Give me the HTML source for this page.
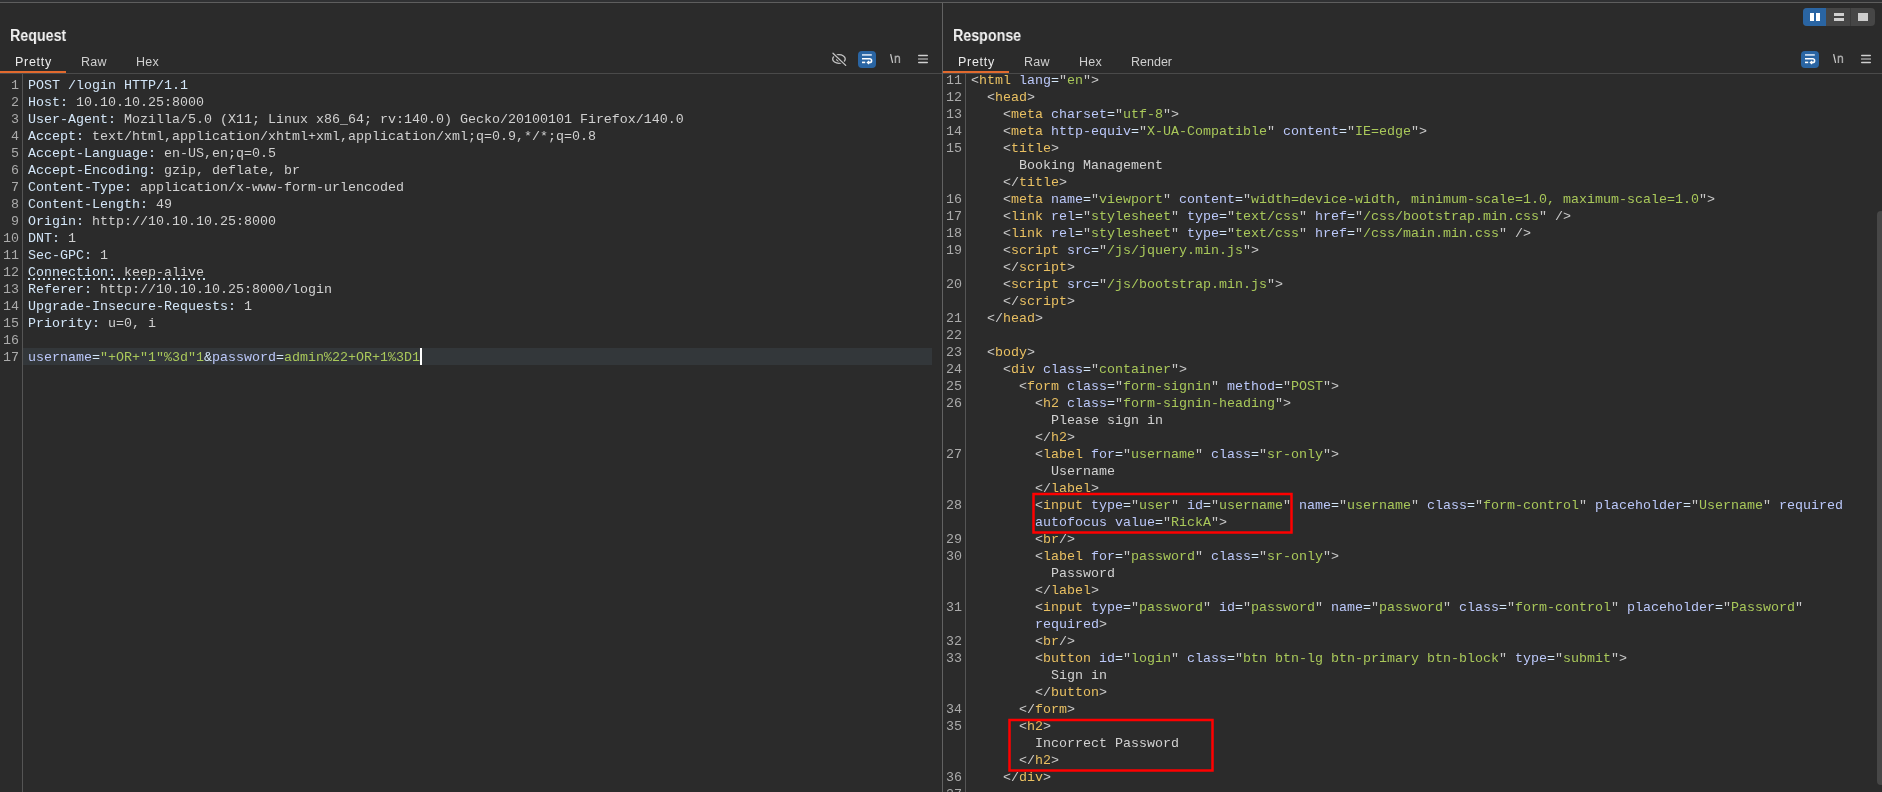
<!DOCTYPE html><html><head><meta charset="utf-8"><style>
*{margin:0;padding:0;box-sizing:border-box}
html,body{width:1882px;height:792px;overflow:hidden;background:#2b2b2b}
body{position:relative;font-family:"Liberation Sans",sans-serif}
.gs{will-change:transform}
.abs{position:absolute}
i{font-style:normal}
.code{position:absolute;font-family:"Liberation Mono",monospace;font-size:13.333px;line-height:17px;white-space:pre;}
.nums{position:absolute;font-family:"Liberation Mono",monospace;font-size:13.333px;line-height:17px;white-space:pre;text-align:right;color:#ababab;width:40px}
.p{color:#c9c9c9} .tg{color:#e9c062} .at{color:#bbc8fa} .av{color:#a9c85a} .tx{color:#d2d2d2}
.hn{color:#d3e6f8} .hv{color:#d0d0d0} .an{color:#bbc8fa}
.h{position:absolute;font-weight:bold;font-size:16px;color:#f2f2f2;transform-origin:0 0;transform:scaleX(0.89);white-space:nowrap;line-height:20px;will-change:transform}
.tab{position:absolute;font-size:12.5px;letter-spacing:0.5px;color:#cfcfcf;white-space:nowrap;line-height:16px;will-change:transform}
.tab.sel{color:#ececec}
.line{position:absolute;background:#4a4a4a}
.orange{position:absolute;background:#e26a2e;height:2px}
</style></head><body><div class="abs" style="left:0;top:0;width:1882px;height:2px;background:#303133"></div><div class="abs" style="left:0;top:2px;width:1882px;height:1px;background:#5e5e5e"></div><div class="abs" style="left:942px;top:3px;width:1px;height:789px;background:#626262"></div><div class="h" style="left:10px;top:26px">Request</div><div class="tab sel" style="left:15px;top:54px;letter-spacing:0.7px">Pretty</div><div class="tab" style="left:81px;top:54px;letter-spacing:0.2px">Raw</div><div class="tab" style="left:136px;top:54px;letter-spacing:0.2px">Hex</div><div class="line" style="left:0;top:73px;width:942px;height:1px"></div><div class="orange" style="left:0;top:71px;width:66px"></div><div class="h" style="left:953px;top:26px">Response</div><div class="tab sel" style="left:958px;top:54px;letter-spacing:0.7px">Pretty</div><div class="tab" style="left:1024px;top:54px;letter-spacing:0.2px">Raw</div><div class="tab" style="left:1079px;top:54px;letter-spacing:0.2px">Hex</div><div class="tab" style="left:1131px;top:54px;letter-spacing:0.0px">Render</div><div class="line" style="left:943px;top:73px;width:939px;height:1px"></div><div class="orange" style="left:943px;top:71px;width:66px"></div><div class="abs" style="left:22px;top:74px;width:1px;height:718px;background:#555"></div><div class="abs" style="left:23px;top:348px;width:909px;height:17px;background:#33373a"></div><div class="abs" style="left:28px;top:278px;width:178px;height:2px;background:repeating-linear-gradient(90deg,#c9dbe8 0 2px,transparent 2px 5px)"></div><div class="nums gs" style="left:-21px;top:77px">1
2
3
4
5
6
7
8
9
10
11
12
13
14
15
16
17</div><div class="code gs" style="left:28px;top:77px"><i class="hn">POST /login HTTP/1.1</i>
<i class="hn">Host:</i><i class="hv"> 10.10.10.25:8000</i>
<i class="hn">User-Agent:</i><i class="hv"> Mozilla/5.0 (X11; Linux x86_64; rv:140.0) Gecko/20100101 Firefox/140.0</i>
<i class="hn">Accept:</i><i class="hv"> text/html,application/xhtml+xml,application/xml;q=0.9,*/*;q=0.8</i>
<i class="hn">Accept-Language:</i><i class="hv"> en-US,en;q=0.5</i>
<i class="hn">Accept-Encoding:</i><i class="hv"> gzip, deflate, br</i>
<i class="hn">Content-Type:</i><i class="hv"> application/x-www-form-urlencoded</i>
<i class="hn">Content-Length:</i><i class="hv"> 49</i>
<i class="hn">Origin:</i><i class="hv"> http://10.10.10.25:8000</i>
<i class="hn">DNT:</i><i class="hv"> 1</i>
<i class="hn">Sec-GPC:</i><i class="hv"> 1</i>
<i class="hn">Connection:</i><i class="hv"> keep-alive</i>
<i class="hn">Referer:</i><i class="hv"> http://10.10.10.25:8000/login</i>
<i class="hn">Upgrade-Insecure-Requests:</i><i class="hv"> 1</i>
<i class="hn">Priority:</i><i class="hv"> u=0, i</i>

<i class="an">username</i><i class="hn">=</i><i class="av">"+OR+"1"%3d"1</i><i class="hn">&amp;</i><i class="an">password</i><i class="hn">=</i><i class="av">admin%22+OR+1%3D1</i></div><div class="abs" style="left:420px;top:348px;width:2px;height:17px;background:#fff"></div><div class="abs" style="left:965px;top:74px;width:1px;height:718px;background:#555"></div><div class="abs" style="left:943px;top:74px;width:939px;height:718px;overflow:hidden"><div class="nums gs" style="left:-21px;top:-2px">11
12
13
14
15


16
17
18
19

20

21
22
23
24
25
26


27


28

29
30


31

32
33


34
35


36
37</div><div class="code gs" style="left:28px;top:-2px"><i class="p">&lt;</i><i class="tg">html</i> <i class="at">lang</i><i class="hn">=</i><i class="p">"</i><i class="av">en</i><i class="p">"</i><i class="p">&gt;</i>
  <i class="p">&lt;</i><i class="tg">head</i><i class="p">&gt;</i>
    <i class="p">&lt;</i><i class="tg">meta</i> <i class="at">charset</i><i class="hn">=</i><i class="p">"</i><i class="av">utf-8</i><i class="p">"</i><i class="p">&gt;</i>
    <i class="p">&lt;</i><i class="tg">meta</i> <i class="at">http-equiv</i><i class="hn">=</i><i class="p">"</i><i class="av">X-UA-Compatible</i><i class="p">"</i> <i class="at">content</i><i class="hn">=</i><i class="p">"</i><i class="av">IE=edge</i><i class="p">"</i><i class="p">&gt;</i>
    <i class="p">&lt;</i><i class="tg">title</i><i class="p">&gt;</i>
      <i class="tx">Booking Management</i>
    <i class="p">&lt;/</i><i class="tg">title</i><i class="p">&gt;</i>
    <i class="p">&lt;</i><i class="tg">meta</i> <i class="at">name</i><i class="hn">=</i><i class="p">"</i><i class="av">viewport</i><i class="p">"</i> <i class="at">content</i><i class="hn">=</i><i class="p">"</i><i class="av">width=device-width, minimum-scale=1.0, maximum-scale=1.0</i><i class="p">"</i><i class="p">&gt;</i>
    <i class="p">&lt;</i><i class="tg">link</i> <i class="at">rel</i><i class="hn">=</i><i class="p">"</i><i class="av">stylesheet</i><i class="p">"</i> <i class="at">type</i><i class="hn">=</i><i class="p">"</i><i class="av">text/css</i><i class="p">"</i> <i class="at">href</i><i class="hn">=</i><i class="p">"</i><i class="av">/css/bootstrap.min.css</i><i class="p">"</i> <i class="p">/&gt;</i>
    <i class="p">&lt;</i><i class="tg">link</i> <i class="at">rel</i><i class="hn">=</i><i class="p">"</i><i class="av">stylesheet</i><i class="p">"</i> <i class="at">type</i><i class="hn">=</i><i class="p">"</i><i class="av">text/css</i><i class="p">"</i> <i class="at">href</i><i class="hn">=</i><i class="p">"</i><i class="av">/css/main.min.css</i><i class="p">"</i> <i class="p">/&gt;</i>
    <i class="p">&lt;</i><i class="tg">script</i> <i class="at">src</i><i class="hn">=</i><i class="p">"</i><i class="av">/js/jquery.min.js</i><i class="p">"</i><i class="p">&gt;</i>
    <i class="p">&lt;/</i><i class="tg">script</i><i class="p">&gt;</i>
    <i class="p">&lt;</i><i class="tg">script</i> <i class="at">src</i><i class="hn">=</i><i class="p">"</i><i class="av">/js/bootstrap.min.js</i><i class="p">"</i><i class="p">&gt;</i>
    <i class="p">&lt;/</i><i class="tg">script</i><i class="p">&gt;</i>
  <i class="p">&lt;/</i><i class="tg">head</i><i class="p">&gt;</i>

  <i class="p">&lt;</i><i class="tg">body</i><i class="p">&gt;</i>
    <i class="p">&lt;</i><i class="tg">div</i> <i class="at">class</i><i class="hn">=</i><i class="p">"</i><i class="av">container</i><i class="p">"</i><i class="p">&gt;</i>
      <i class="p">&lt;</i><i class="tg">form</i> <i class="at">class</i><i class="hn">=</i><i class="p">"</i><i class="av">form-signin</i><i class="p">"</i> <i class="at">method</i><i class="hn">=</i><i class="p">"</i><i class="av">POST</i><i class="p">"</i><i class="p">&gt;</i>
        <i class="p">&lt;</i><i class="tg">h2</i> <i class="at">class</i><i class="hn">=</i><i class="p">"</i><i class="av">form-signin-heading</i><i class="p">"</i><i class="p">&gt;</i>
          <i class="tx">Please sign in</i>
        <i class="p">&lt;/</i><i class="tg">h2</i><i class="p">&gt;</i>
        <i class="p">&lt;</i><i class="tg">label</i> <i class="at">for</i><i class="hn">=</i><i class="p">"</i><i class="av">username</i><i class="p">"</i> <i class="at">class</i><i class="hn">=</i><i class="p">"</i><i class="av">sr-only</i><i class="p">"</i><i class="p">&gt;</i>
          <i class="tx">Username</i>
        <i class="p">&lt;/</i><i class="tg">label</i><i class="p">&gt;</i>
        <i class="p">&lt;</i><i class="tg">input</i> <i class="at">type</i><i class="hn">=</i><i class="p">"</i><i class="av">user</i><i class="p">"</i> <i class="at">id</i><i class="hn">=</i><i class="p">"</i><i class="av">username</i><i class="p">"</i> <i class="at">name</i><i class="hn">=</i><i class="p">"</i><i class="av">username</i><i class="p">"</i> <i class="at">class</i><i class="hn">=</i><i class="p">"</i><i class="av">form-control</i><i class="p">"</i> <i class="at">placeholder</i><i class="hn">=</i><i class="p">"</i><i class="av">Username</i><i class="p">"</i> <i class="at">required</i>
        <i class="at">autofocus</i> <i class="at">value</i><i class="hn">=</i><i class="p">"</i><i class="av">RickA</i><i class="p">"</i><i class="p">&gt;</i>
        <i class="p">&lt;</i><i class="tg">br</i><i class="p">/&gt;</i>
        <i class="p">&lt;</i><i class="tg">label</i> <i class="at">for</i><i class="hn">=</i><i class="p">"</i><i class="av">password</i><i class="p">"</i> <i class="at">class</i><i class="hn">=</i><i class="p">"</i><i class="av">sr-only</i><i class="p">"</i><i class="p">&gt;</i>
          <i class="tx">Password</i>
        <i class="p">&lt;/</i><i class="tg">label</i><i class="p">&gt;</i>
        <i class="p">&lt;</i><i class="tg">input</i> <i class="at">type</i><i class="hn">=</i><i class="p">"</i><i class="av">password</i><i class="p">"</i> <i class="at">id</i><i class="hn">=</i><i class="p">"</i><i class="av">password</i><i class="p">"</i> <i class="at">name</i><i class="hn">=</i><i class="p">"</i><i class="av">password</i><i class="p">"</i> <i class="at">class</i><i class="hn">=</i><i class="p">"</i><i class="av">form-control</i><i class="p">"</i> <i class="at">placeholder</i><i class="hn">=</i><i class="p">"</i><i class="av">Password</i><i class="p">"</i>
        <i class="at">required</i><i class="p">&gt;</i>
        <i class="p">&lt;</i><i class="tg">br</i><i class="p">/&gt;</i>
        <i class="p">&lt;</i><i class="tg">button</i> <i class="at">id</i><i class="hn">=</i><i class="p">"</i><i class="av">login</i><i class="p">"</i> <i class="at">class</i><i class="hn">=</i><i class="p">"</i><i class="av">btn btn-lg btn-primary btn-block</i><i class="p">"</i> <i class="at">type</i><i class="hn">=</i><i class="p">"</i><i class="av">submit</i><i class="p">"</i><i class="p">&gt;</i>
          <i class="tx">Sign in</i>
        <i class="p">&lt;/</i><i class="tg">button</i><i class="p">&gt;</i>
      <i class="p">&lt;/</i><i class="tg">form</i><i class="p">&gt;</i>
      <i class="p">&lt;</i><i class="tg">h2</i><i class="p">&gt;</i>
        <i class="tx">Incorrect Password</i>
      <i class="p">&lt;/</i><i class="tg">h2</i><i class="p">&gt;</i>
    <i class="p">&lt;/</i><i class="tg">div</i><i class="p">&gt;</i>
</div></div><svg class="abs" style="left:0;top:0" width="1882" height="792"><rect x="1033.5" y="494" width="258" height="38.5" fill="none" stroke="#ff0000" stroke-width="2.5"/><rect x="1009.5" y="720" width="203" height="50.5" fill="none" stroke="#ff0000" stroke-width="2.5"/></svg><div class="abs" style="left:1877px;top:211px;width:8px;height:574px;background:#474747;border-radius:4px"></div><svg class="abs" style="left:828px;top:49px" width="22" height="20" viewBox="0 0 22 20">
<ellipse cx="10.95" cy="10" rx="6.3" ry="4.3" fill="none" stroke="#c4c4c4" stroke-width="1.3"/>
<circle cx="10.3" cy="10.5" r="2.1" fill="#c4c4c4"/>
<path d="M5 4.2 L17.7 16.4" stroke="#2b2b2b" stroke-width="3.4"/>
<path d="M5 4.2 L17.7 16.4" stroke="#c4c4c4" stroke-width="1.3" stroke-linecap="round"/>
</svg><div class="abs" style="left:858px;top:51px;width:18px;height:17px;background:#2a65a3;border-radius:4px"></div>
<svg class="abs" style="left:858px;top:51px" width="18" height="17" viewBox="0 0 18 17">
<rect x="4" y="3" width="9.8" height="1.8" fill="#c3d5ea"/>
<path d="M4 7.8 H11.75 A1.85 1.85 0 0 1 11.75 11.5 H10.2" fill="none" stroke="#fff" stroke-width="1.55"/>
<path d="M11.2 9.9 L9.4 11.4 L11.2 12.9" fill="none" stroke="#fff" stroke-width="1.3"/>
<rect x="4" y="10.6" width="3.2" height="1.6" fill="#fff"/>
</svg><svg class="abs" style="left:889px;top:53px" width="12" height="11" viewBox="0 0 12 11">
<path d="M1.6 1.2 L3.6 9.8" stroke="#d0d0d0" stroke-width="1.2"/>
<path d="M6.4 10 V2.7 M6.4 4.9 C7.2 2.7 10.4 2.5 10.4 5.3 V10" fill="none" stroke="#a8a8a8" stroke-width="1.45"/>
</svg><svg class="abs" style="left:918px;top:54px" width="10" height="10" viewBox="0 0 10 10">
<rect x="0" y="0.8" width="10" height="1.4" rx="0.7" fill="#d0d0d0"/>
<rect x="0" y="4.3" width="10" height="1.4" rx="0.3" fill="#9c9c9c"/>
<rect x="0" y="7.8" width="10" height="1.4" rx="0.7" fill="#d0d0d0"/>
</svg><div class="abs" style="left:1801px;top:51px;width:18px;height:17px;background:#2a65a3;border-radius:4px"></div>
<svg class="abs" style="left:1801px;top:51px" width="18" height="17" viewBox="0 0 18 17">
<rect x="4" y="3" width="9.8" height="1.8" fill="#c3d5ea"/>
<path d="M4 7.8 H11.75 A1.85 1.85 0 0 1 11.75 11.5 H10.2" fill="none" stroke="#fff" stroke-width="1.55"/>
<path d="M11.2 9.9 L9.4 11.4 L11.2 12.9" fill="none" stroke="#fff" stroke-width="1.3"/>
<rect x="4" y="10.6" width="3.2" height="1.6" fill="#fff"/>
</svg><svg class="abs" style="left:1832px;top:53px" width="12" height="11" viewBox="0 0 12 11">
<path d="M1.6 1.2 L3.6 9.8" stroke="#d0d0d0" stroke-width="1.2"/>
<path d="M6.4 10 V2.7 M6.4 4.9 C7.2 2.7 10.4 2.5 10.4 5.3 V10" fill="none" stroke="#a8a8a8" stroke-width="1.45"/>
</svg><svg class="abs" style="left:1861px;top:54px" width="10" height="10" viewBox="0 0 10 10">
<rect x="0" y="0.8" width="10" height="1.4" rx="0.7" fill="#d0d0d0"/>
<rect x="0" y="4.3" width="10" height="1.4" rx="0.3" fill="#9c9c9c"/>
<rect x="0" y="7.8" width="10" height="1.4" rx="0.7" fill="#d0d0d0"/>
</svg><div class="abs" style="left:1803px;top:8px;width:72px;height:18px;border-radius:4px;background:#464646;overflow:hidden">
<div class="abs" style="left:0;top:0;width:23px;height:18px;background:#2a65a3"></div>
<div class="abs" style="left:47px;top:0;width:1px;height:18px;background:#3a3a3a"></div>
<div class="abs" style="left:7px;top:5px;width:4px;height:8px;background:#fff"></div>
<div class="abs" style="left:13px;top:5px;width:4px;height:8px;background:#fff"></div>
<div class="abs" style="left:31px;top:5px;width:10px;height:3px;background:#d0d0d0"></div>
<div class="abs" style="left:31px;top:10px;width:10px;height:3px;background:#d0d0d0"></div>
<div class="abs" style="left:55px;top:5px;width:10px;height:8px;background:#cdcdcd"></div>
</div></body></html>
